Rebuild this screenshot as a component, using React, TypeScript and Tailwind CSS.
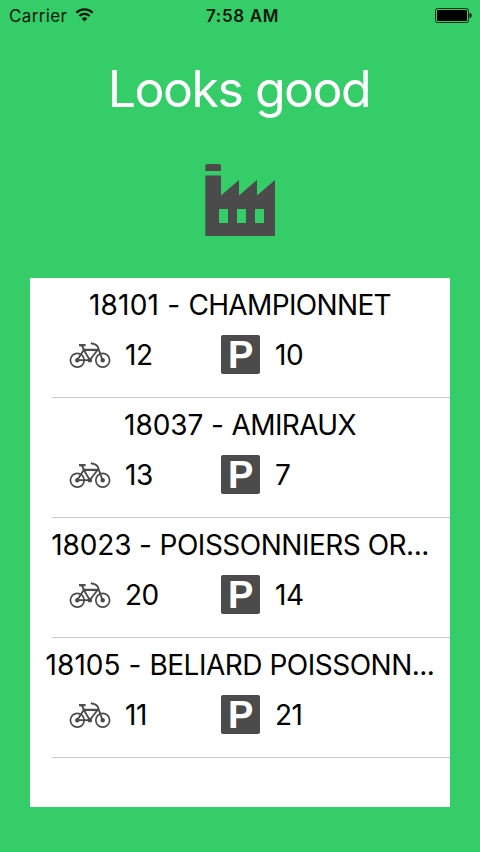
const stations = [
  { code: '18101 - ', name: 'CHAMPIONNET', bikes: 12, docks: 10, codeFit: 'tracking-[0.2px]', nameFit: 'tracking-[-0.65px]' },
  { code: '18037 - ', name: 'AMIRAUX', bikes: 13, docks: 7, codeFit: 'tracking-[-0.08px]', nameFit: 'tracking-[-0.65px]' },
  { code: '18023 - ', name: 'POISSONNIERS OR...', bikes: 20, docks: 14, codeFit: 'tracking-[-0.13px]', nameFit: 'tracking-[-0.5px]' },
  { code: '18105 - ', name: 'BELIARD POISSONN...', bikes: 11, docks: 21, codeFit: 'tracking-[0.06px]', nameFit: 'tracking-[-0.5px]' },
];

function WifiIcon() {
  return (
    <svg className="ml-[8px] h-[14px] w-[20px]" viewBox="0 0 20 14" fill="none" stroke="#06170c">
      <path d="M1.3 4.7A12 12 0 0 1 17.7 4.7" strokeWidth="2.2" />
      <path d="M4.4 8a7.2 7.2 0 0 1 10.2 0" strokeWidth="2.2" />
      <path d="M9.5 13.5 6.6 10.6a4.1 4.1 0 0 1 5.8 0Z" fill="#06170c" stroke="none" />
    </svg>
  );
}

function BatteryIcon() {
  return (
    <svg className="h-[16px] w-[38px]" viewBox="0 0 38 16">
      <rect x="0.5" y="1.5" width="33" height="14" rx="2" fill="none" stroke="#0a2c16" />
      <rect x="2" y="3" width="30" height="11" rx="0.5" fill="#000" />
      <path d="M34.5 6c1.6.2 2.2 1.2 2.2 2.5s-.6 2.3-2.2 2.5Z" fill="#06170c" />
    </svg>
  );
}

function FactoryIcon() {
  return (
    <svg className="h-[73px] w-[70px]" viewBox="0 0 70 73" fill="#4b4b4b">
      <path d="M0.3 7V2Q0.3 0 2.3 0H14Q16 0 16 2V7Z" />
      <path
        fillRule="evenodd"
        d="M0.3 11.5H16V31.5L34 16V31.5L52 16V31.5L70 16V72H0.3ZM14 45V59H23V45ZM32 45V59H41V45ZM50 45V59H59V45Z"
      />
    </svg>
  );
}

function BikeIcon() {
  return (
    <svg className="h-[27px] w-[42px]" viewBox="0 0 42 27" fill="none" stroke="#4b4b4b" strokeWidth="1.7">
      <circle cx="8.3" cy="18.2" r="6.9" />
      <circle cx="33.7" cy="18.2" r="6.9" />
      <circle cx="8.3" cy="18.2" r="1.4" fill="#4b4b4b" />
      <circle cx="33.7" cy="18.2" r="1.4" fill="#4b4b4b" />
      <circle cx="20.8" cy="18.2" r="1.5" fill="#4b4b4b" />
      <path d="M8.3 18 14.8 8 20.8 18 28.6 8M8.3 18.2H20.8" strokeWidth="1.8" />
      <path d="M14.4 7.9H29.4" strokeWidth="2.3" />
      <path d="M14.9 8 13 3.6M33.5 18 28.9 5C28.2 2.8 26.6 2.1 21.8 1.2" strokeWidth="1.9" />
      <path d="M10 3.2H16.6" strokeWidth="2.3" />
    </svg>
  );
}

export default function App() {
  return (
    <div className="flex h-[852px] w-[480px] flex-col overflow-hidden bg-[#35cd68] font-['Inter',sans-serif]">
      <header className="grid h-[30px] grid-cols-[1fr_auto_1fr] items-center pl-[9px] pr-[7px] text-[17px] leading-[28px] text-[#06170c]">
        <div className="flex items-center">
          <span className="pt-[2px] tracking-[0.35px]">Carrier</span>
          <WifiIcon />
        </div>
        <span className="pl-[3px] pt-[2px] font-semibold tracking-[0.65px]">7:58 AM</span>
        <div className="flex justify-end">
          <BatteryIcon />
        </div>
      </header>
      <h1 className="mt-[27px] h-[64px] whitespace-nowrap pr-[2px] text-center text-[50px] leading-[64px] tracking-[-1.5px] text-white">
        Looks good
      </h1>
      <div className="mt-[43px] flex h-[73px] justify-center">
        <FactoryIcon />
      </div>
      <main className="mx-[30px] mt-[41px] h-[529px] bg-white text-black">
        {stations.map((s) => (
          <section key={s.name} className="flex h-[120px] flex-col">
            <h2 className="mt-[9px] h-[36px] whitespace-pre text-center text-[28px] leading-[36px]">
              <span className={s.codeFit}>{s.code}</span>
              <span className={s.nameFit}>{s.name}</span>
            </h2>
            <div className="mt-[12px] flex h-[40px] items-center pl-[39px] text-[28px] leading-[40px]">
              <BikeIcon />
              <span className="ml-[14px] w-[95.5px] tracking-[-0.5px]">{s.bikes}</span>
              <span className="mb-[1px] flex h-[39px] w-[39px] items-center justify-center rounded-[2px] bg-[#4b4b4b] pl-[1.5px] pt-[1px] font-['Liberation_Sans',sans-serif] text-[38px] font-bold leading-[38px] text-white">
                P
              </span>
              <span className="ml-[15.5px] tracking-[-0.5px]">{s.docks}</span>
            </div>
            <div className="mb-0 ml-[22px] mt-auto h-px bg-[#c8c7cc]" />
          </section>
        ))}
      </main>
    </div>
  );
}
